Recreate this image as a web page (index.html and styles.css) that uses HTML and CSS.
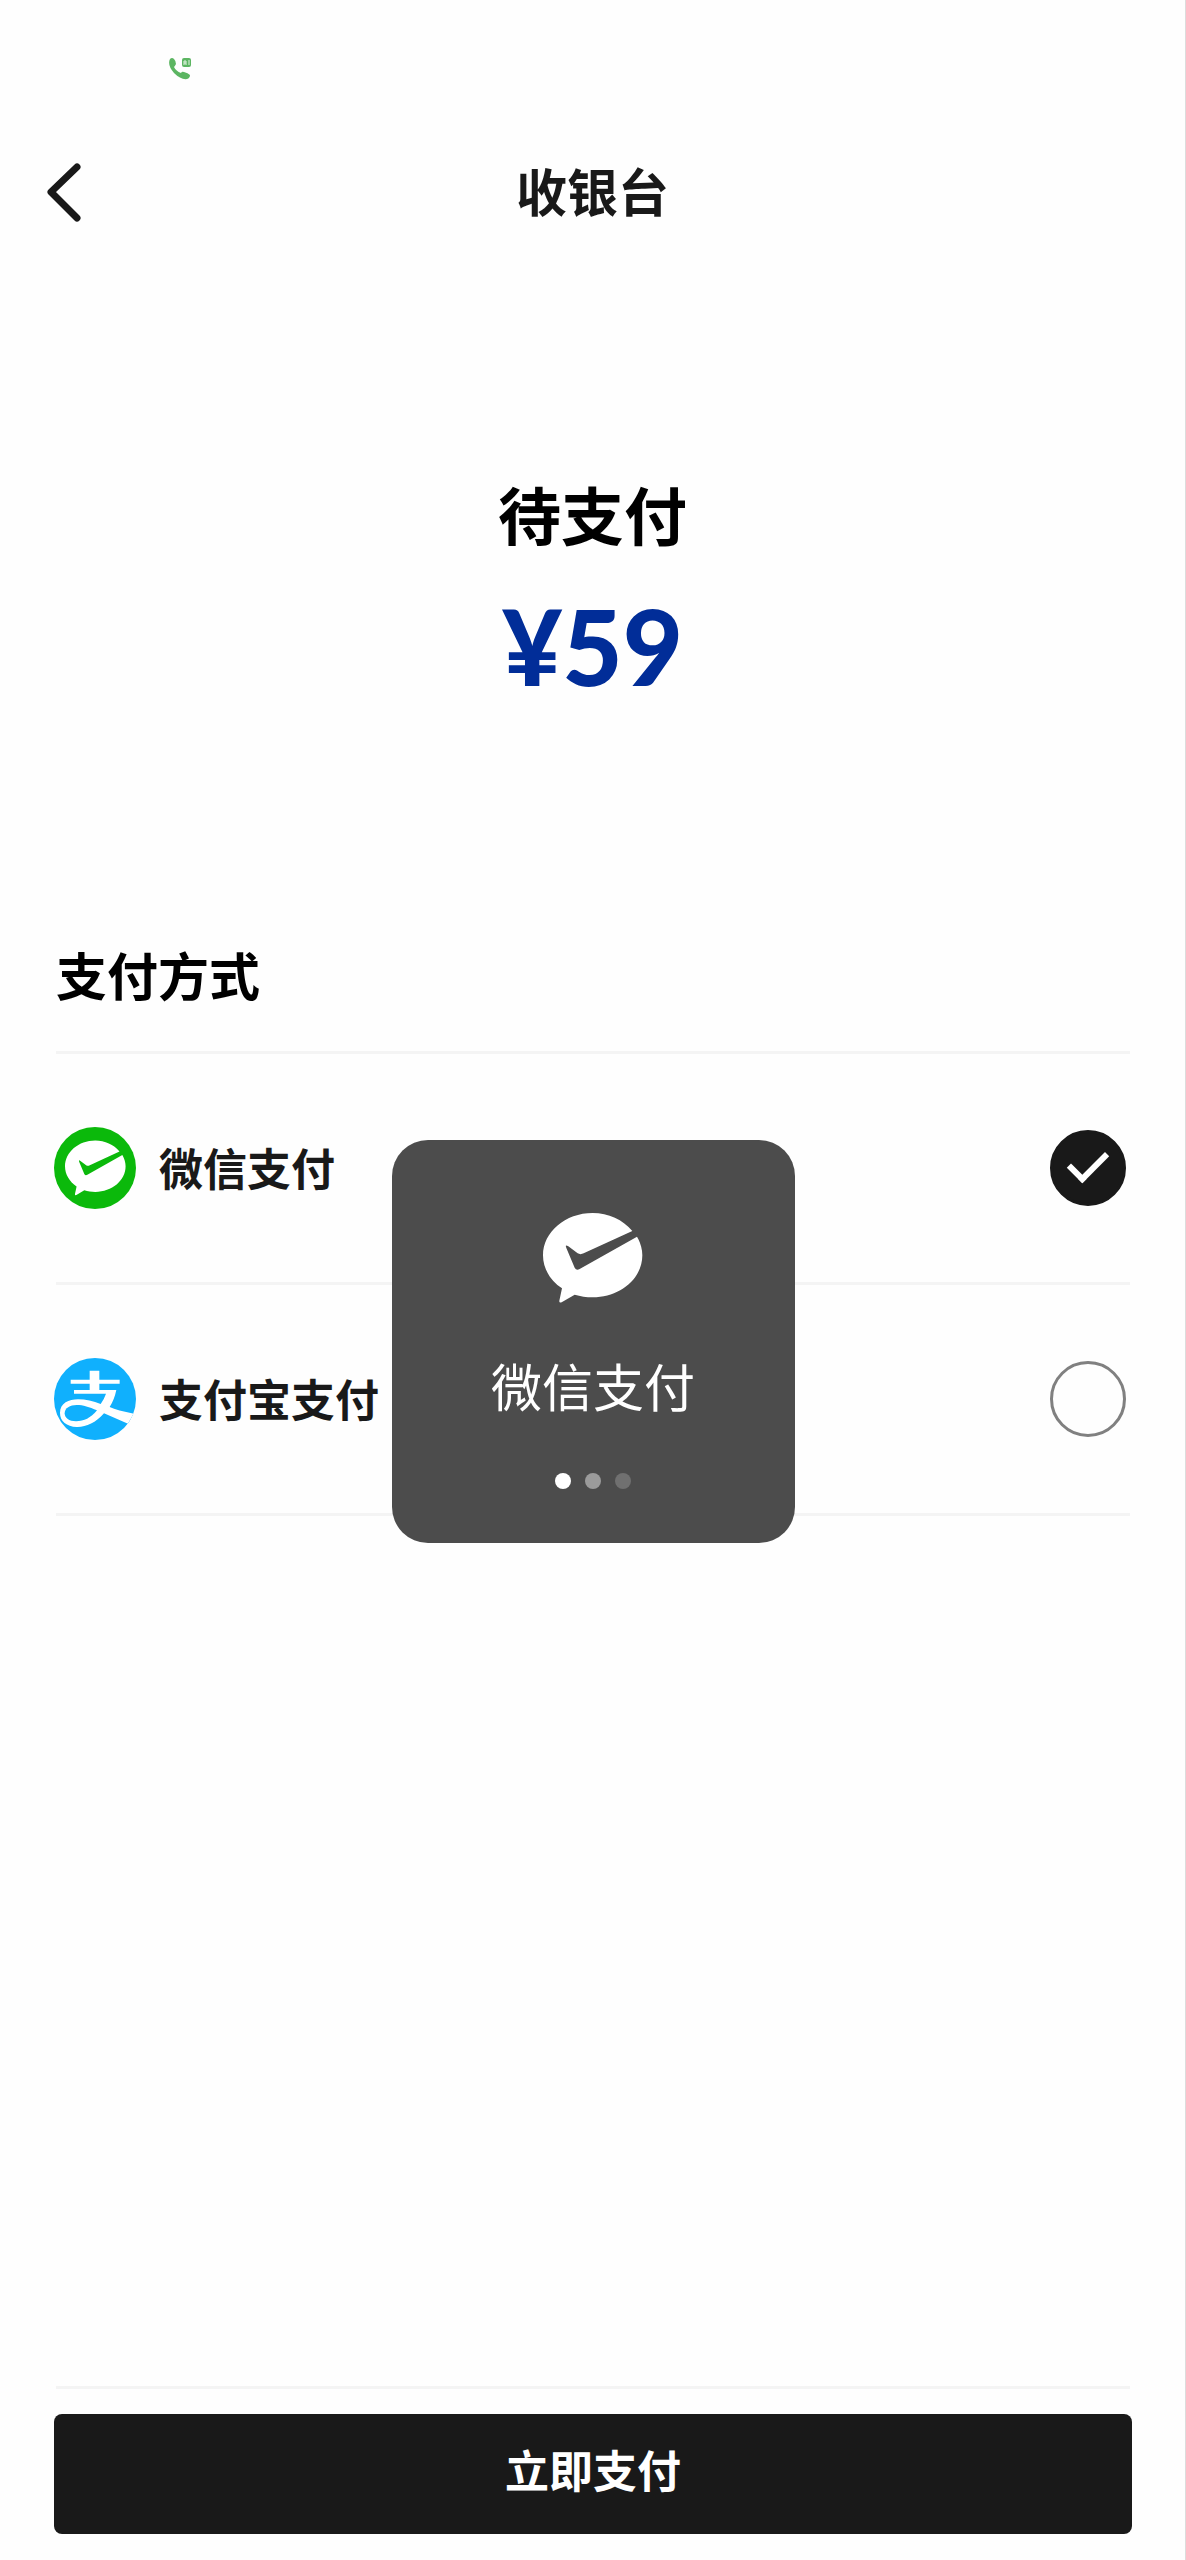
FILE: index.html
```html
<!DOCTYPE html>
<html lang="zh-CN">
<head>
  <meta charset="UTF-8">
  <meta name="viewport" content="width=device-width, initial-scale=1.0">
  <title>收银台</title>
  <link rel="stylesheet" href="styles.css">
</head>
<body>
  <!-- Shared logo shape -->
  <svg class="defs" width="0" height="0" aria-hidden="true">
    <symbol id="wechatPay" viewBox="0 0 300 270">
      <path d="M268 54 L122 121 Q112 126 104 121 L76 100 Q65 93 70 105 L95 164 Q100 174 110 168 L282 71 C292 88 298 107 298 127 C298 197 231 253 149 253 C130 253 112 250 95 245 L56 268 Q48 271 49 263 L57 226 C22 203 0 167 0 127 C0 57 67 0 149 0 C196 0 240 20 268 54Z"/>
    </symbol>
  </svg>

  <form class="page">
    <!-- Status bar -->
    <div class="status-bar">
      <svg class="call-icon" viewBox="0 0 24 24" aria-hidden="true">
        <path d="M2 2 Q4 0 6 2 Q8 4 8 7 Q7 9 6 10 Q8 14 13 16 Q14 14 16 15 Q20 16 22 18 Q22 21 19 22 Q13 23 6 16 Q-1 8 2 2Z"/>
        <rect x="14" y="1" width="9" height="9" rx="2"/>
        <path class="call-mark" d="M16 8 V4 H18 V8 M16 6 H18 M21 3 V8"/>
      </svg>
    </div>

    <!-- Header -->
    <header class="header">
      <button type="button" class="back" aria-label="返回">
        <svg viewBox="0 0 36 60" aria-hidden="true">
          <path d="M31 4 L5 29 L31 55"/>
        </svg>
      </button>
      <h1>收银台</h1>
    </header>

    <!-- Amount -->
    <section class="amount">
      <p class="amount-label">待支付</p>
      <p class="amount-value">¥59</p>
    </section>

    <!-- Payment methods -->
    <main class="methods">
      <h2>支付方式</h2>
      <label class="method" for="wechat">
        <svg class="logo" viewBox="0 0 82 82" aria-hidden="true">
          <circle cx="41" cy="41" r="41" fill="#0bb90b"/>
          <use href="#wechatPay" x="11" y="13" width="61" height="56" fill="#fff"/>
        </svg>
        <span class="method-name">微信支付</span>
        <input type="radio" name="method" id="wechat" checked>
      </label>
      <label class="method" for="alipay">
        <svg class="logo" viewBox="0 0 246 246" aria-hidden="true">
          <clipPath id="round"><circle cx="123" cy="123" r="123"/></clipPath>
          <g clip-path="url(#round)">
            <rect width="246" height="246" fill="#10b0fd"/>
            <path fill="#fff" d="M107 38 H136 V65 H197 V77 H136 V96 H187 Q181 125 167 147 Q190 158 240 167 L222 197 L150 166 C125 195 95 208 68 207 C38 206 18 190 18 165 C18 135 45 124 72 124 C95 124 118 129 140 138 Q151 122 156 107 H60 V96 H107 V77 H50 V65 H107Z"/>
            <path fill="#10b0fd" d="M129 157 C110 180 90 190 66 190 C45 190 32 180 32 166 C32 150 48 141 68 141 C88 141 105 147 129 157Z"/>
          </g>
        </svg>
        <span class="method-name">支付宝支付</span>
        <input type="radio" name="method" id="alipay">
      </label>
    </main>

    <!-- Pay button -->
    <footer class="footer">
      <button type="submit" class="pay">立即支付</button>
    </footer>
  </form>

  <!-- Loading toast -->
  <div class="overlay">
    <div class="toast" role="status">
      <svg class="toast-logo" aria-hidden="true"><use href="#wechatPay"/></svg>
      <p>微信支付</p>
      <div class="dots">
        <span class="dot"></span>
        <span class="dot"></span>
        <span class="dot"></span>
      </div>
    </div>
  </div>
</body>
</html>
```

FILE: styles.css
```css
* {
  margin: 0;
  padding: 0;
  box-sizing: border-box;
}
body {
  background: #fefefe;
  color: #191919;
  font-family: "Noto Sans CJK SC", "Noto Sans", sans-serif;
}
.defs {
  position: absolute;
}
.page {
  display: flex;
  flex-direction: column;
  min-height: 100vh;
  border-right: 1px solid #dcdcdc;
}
.status-bar {
  height: 138px;
  padding: 57px 168px 0;
}
.call-icon {
  display: block;
  width: 24px;
  height: 24px;
  fill: #5cb562;
}
.call-icon .call-mark {
  fill: none;
  stroke: #e2f3e2;
}
.header {
  display: grid;
  grid-template-columns: 90px 1fr 90px;
  align-items: center;
  height: 110px;
}
.header h1 {
  padding-bottom: 6px;
  font-size: 51px;
  line-height: 72px;
  text-align: center;
}
.back {
  height: 60px;
  padding-left: 46px;
  border: none;
  background: none;
  cursor: pointer;
}
.back svg {
  display: block;
  width: 36px;
  height: 60px;
  fill: none;
  stroke: #191919;
  stroke-width: 7;
  stroke-linecap: round;
  stroke-linejoin: round;
}
.amount {
  padding: 220px 0 232px;
  text-align: center;
  font-weight: bold;
}
.amount-label {
  color: #000;
  font-size: 63px;
  line-height: 90px;
}
.amount-value {
  margin-top: 28px;
  color: #012d98;
  font-family: Lato, sans-serif;
  font-size: 104px;
  font-weight: 900;
  line-height: 120px;
}
.methods {
  flex: 1;
  padding: 0 55px 0 56px;
}
.methods h2 {
  padding-bottom: 41px;
  border-bottom: 3px solid #f4f4f4;
  color: #000;
  font-size: 51px;
  line-height: 72px;
}
.method {
  display: flex;
  align-items: center;
  gap: 23px;
  height: 231px;
  border-bottom: 3px solid #f4f4f4;
  cursor: pointer;
}
.logo {
  flex: none;
  width: 82px;
  height: 82px;
  margin-left: -2px;
}
.method-name {
  flex: 1;
  padding-bottom: 2px;
  font-size: 44px;
  font-weight: bold;
  line-height: 64px;
}
.method input {
  appearance: none;
  display: grid;
  place-items: center;
  width: 76px;
  height: 76px;
  margin-right: 4px;
  border: 3px solid #808080;
  border-radius: 50%;
  cursor: pointer;
}
.method input:checked {
  border-color: #191919;
  background: #191919;
}
.method input:checked::after {
  content: "";
  box-sizing: border-box;
  width: 38px;
  height: 22px;
  margin-bottom: 12px;
  border: solid #fff;
  border-width: 0 0 6px 6px;
  transform: rotate(-45deg);
}
.footer {
  padding: 0 53px 26px 54px;
}
.footer::before {
  content: "";
  display: block;
  height: 3px;
  margin: 0 2px 25px;
  background: #f4f4f4;
}
.pay {
  width: 100%;
  height: 120px;
  padding-bottom: 10px;
  border: none;
  border-radius: 8px;
  background: #191919;
  color: #fff;
  font-family: inherit;
  font-size: 44px;
  font-weight: bold;
  cursor: pointer;
}
.overlay {
  position: fixed;
  inset: 122px 0 0;
  display: flex;
  align-items: center;
  justify-content: center;
}
.toast {
  display: flex;
  flex-direction: column;
  align-items: center;
  width: 403px;
  padding: 73px 0 54px;
  border-radius: 36px;
  background: #4c4c4c;
  color: #fff;
}
.toast-logo {
  width: 100px;
  height: 90px;
  fill: #fff;
}
.toast p {
  margin: 46px 0 52px;
  font-size: 51px;
  line-height: 72px;
}
.dots {
  display: flex;
  gap: 14px;
}
.dot {
  width: 16px;
  height: 16px;
  border-radius: 50%;
  background: #fff;
}
.dot:nth-child(2) {
  background: #9b9b9b;
}
.dot:nth-child(3) {
  background: #707070;
}
```
